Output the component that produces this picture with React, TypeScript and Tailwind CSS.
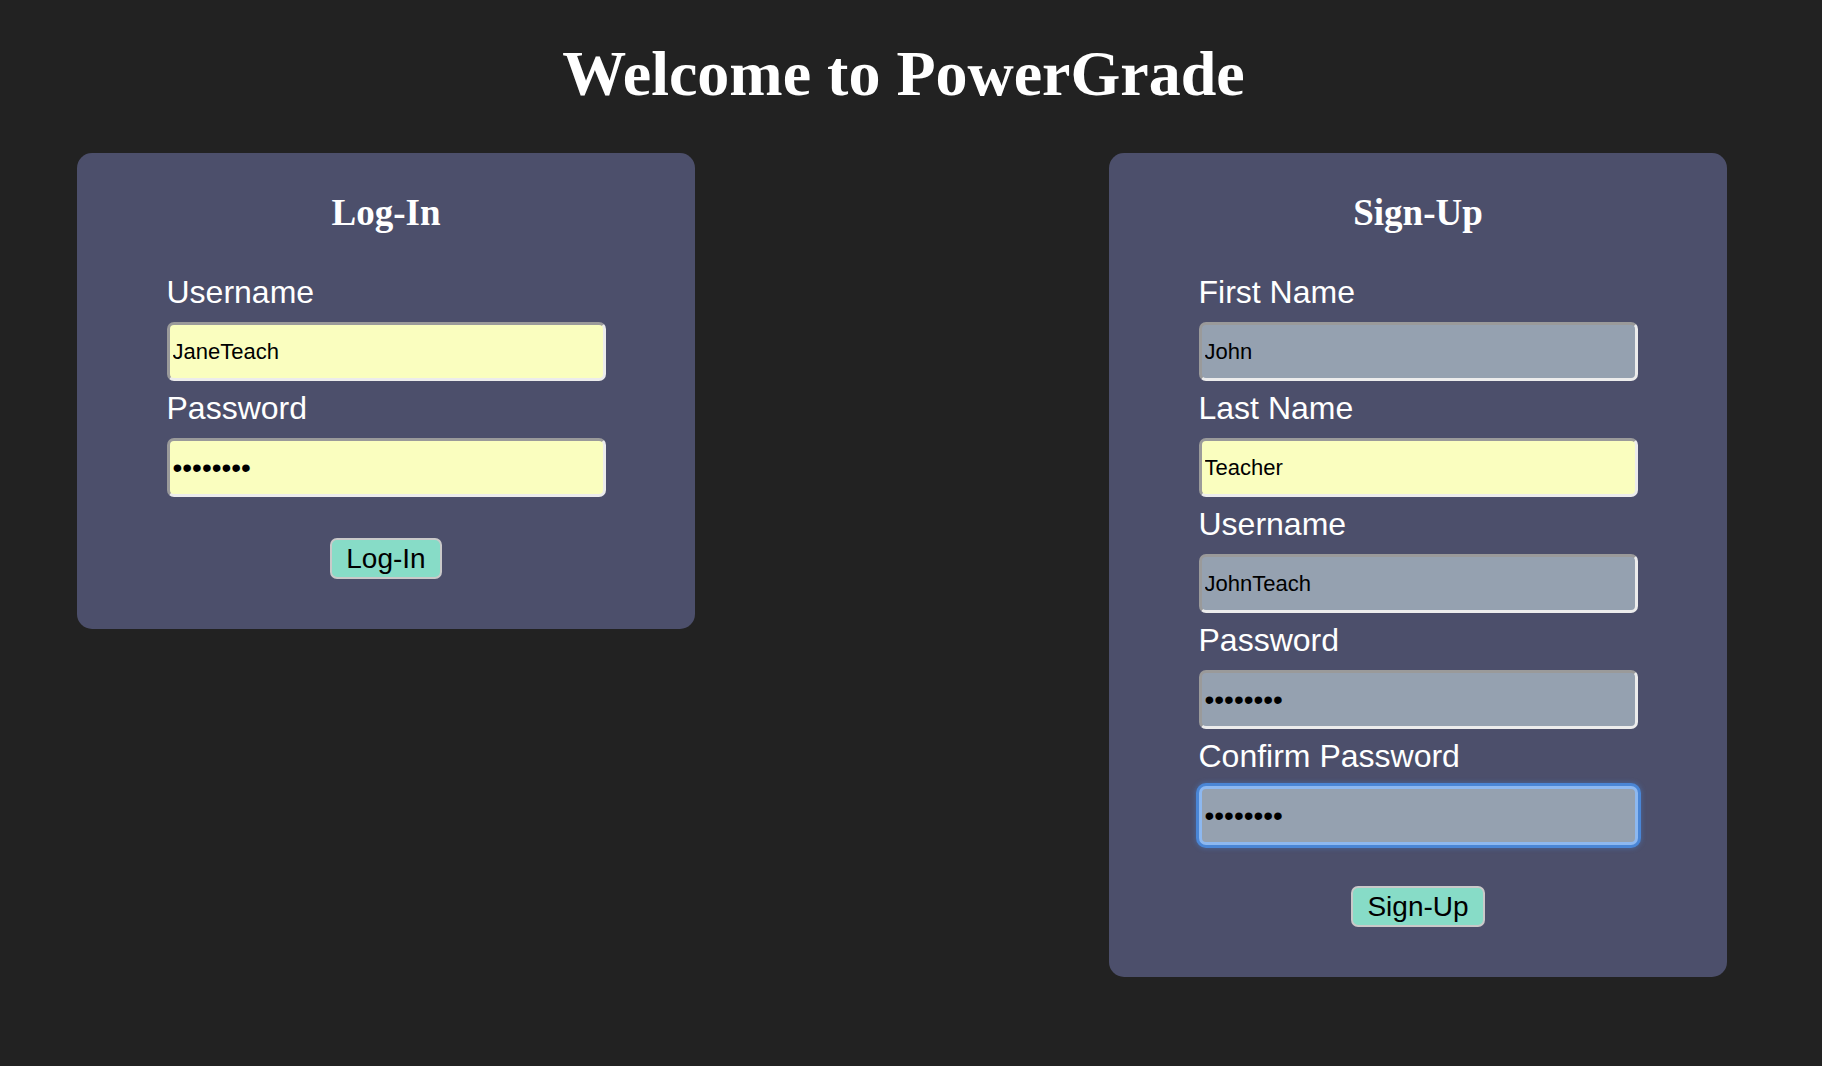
import React from 'react';

interface Field {
  label: string;
  value: string;
  type?: string;
  tone: 'yellow' | 'gray' | 'focus';
}

const loginFields: Field[] = [
  { label: 'Username', value: 'JaneTeach', tone: 'yellow' },
  { label: 'Password', value: 'password', type: 'password', tone: 'yellow' }
];

const signupFields: Field[] = [
  { label: 'First Name', value: 'John', tone: 'gray' },
  { label: 'Last Name', value: 'Teacher', tone: 'yellow' },
  { label: 'Username', value: 'JohnTeach', tone: 'gray' },
  { label: 'Password', value: 'password', type: 'password', tone: 'gray' },
  { label: 'Confirm Password', value: 'password', type: 'password', tone: 'focus' }
];

const toneClass = {
  yellow: 'bg-[#fafebf] border-t-[#9a9a9a] border-l-[#9a9a9a] border-b-[#ececec] border-r-[#ececec]',
  gray: 'bg-[#95a1b0] border-t-[#9a9a9a] border-l-[#9a9a9a] border-b-[#ececec] border-r-[#ececec]',
  focus: 'bg-[#95a1b0] border-[#8db8f0] shadow-[0_0_0_3px_#4a86d6,0_0_4px_4px_rgba(74,134,214,0.35)]'
};

const FormCard: React.FC<{ title: string; fields: Field[]; button: string }> = ({
  title,
  fields,
  button
}) => {
  return (
    <div className="w-[618px] rounded-[15px] bg-[#4c4f6b] pt-[39px] pb-[50px] flex flex-col items-center">
      <h2 className="font-['Liberation_Serif',serif] font-bold text-[37px] leading-[42px] text-white mb-[31px]">
        {title}
      </h2>
      <div className="w-[439px]">
        {fields.map((f) => (
          <div key={f.label} className="mt-[9px]">
            <label className="block font-['Liberation_Sans',Arial,sans-serif] text-[32px] leading-[36px] text-white mb-[12px]">
              {f.label}
            </label>
            <input
              type={f.type || 'text'}
              defaultValue={f.value}
              className={`block w-full h-[59px] rounded-[7px] border-[3px] px-[3px] font-['Liberation_Sans',Arial,sans-serif] text-black outline-none ${
                f.type === 'password' ? 'text-[28px]' : 'text-[22px]'
              } ${toneClass[f.tone]}`}
            />
          </div>
        ))}
      </div>
      <button
        type="button"
        className="mt-[41px] h-[41px] px-[14px] rounded-[7px] border-2 border-[#c9c9c9] bg-[#87dcc7] font-['Liberation_Sans',Arial,sans-serif] text-[28px] leading-[34px] text-black"
      >
        {button}
      </button>
    </div>
  );
};

export default function App() {
  return (
    <div className="min-h-[1066px] w-full bg-[#222222]">
      <div className="w-[1807px]">
        <h1 className="pt-[37px] text-center font-['Liberation_Serif',serif] font-bold text-[64px] leading-[74px] text-white">
          Welcome to PowerGrade
        </h1>
        <div className="mt-[42px] flex items-start justify-between pl-[77px] pr-[80px]">
          <FormCard title="Log-In" fields={loginFields} button="Log-In" />
          <FormCard title="Sign-Up" fields={signupFields} button="Sign-Up" />
        </div>
      </div>
    </div>
  );
}
